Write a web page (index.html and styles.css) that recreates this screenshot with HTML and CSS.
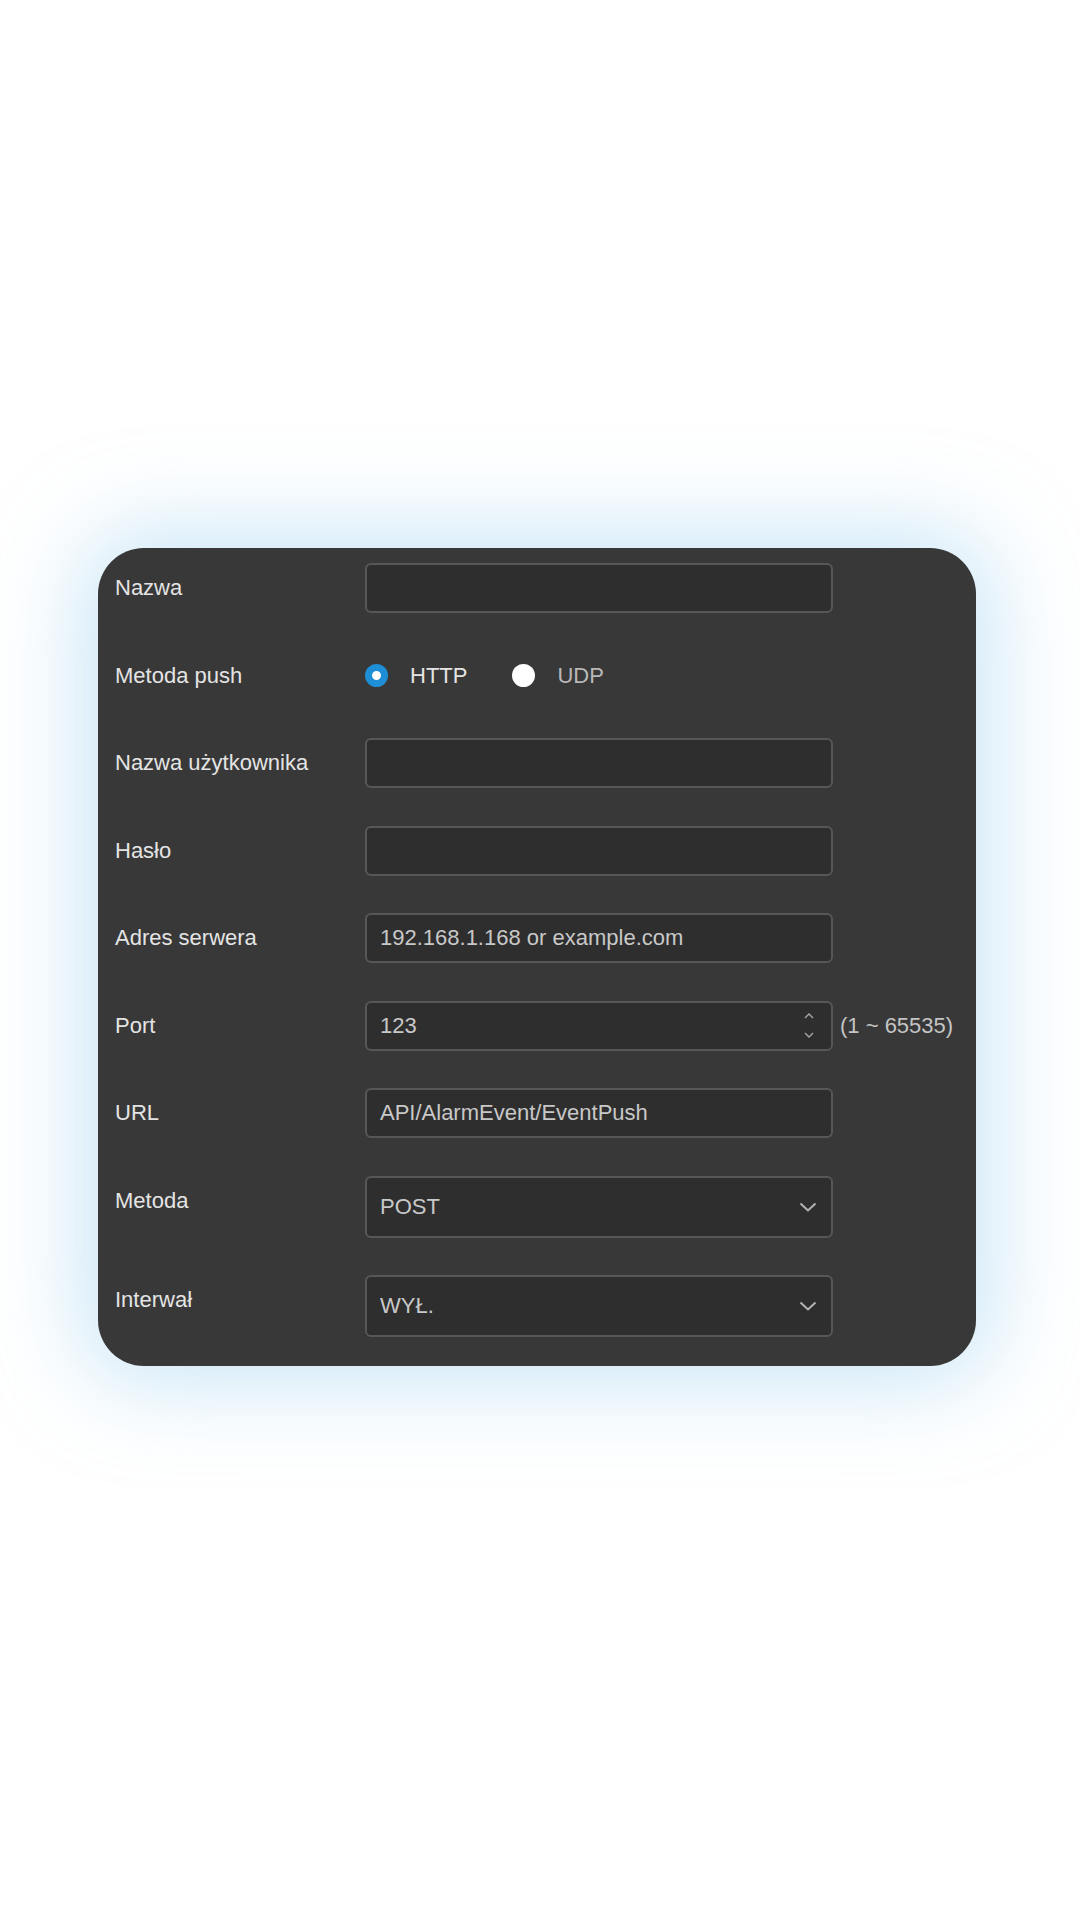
FILE: index.html
```html
<!DOCTYPE html>
<html lang="pl">
<head>
<meta charset="utf-8">
<title>Push</title>
<link rel="stylesheet" href="styles.css">
</head>
<body>
<div class="page">
  <div class="card">
    <div class="row">
      <div class="label">Nazwa</div>
      <div class="field"></div>
    </div>
    <div class="row">
      <div class="label">Metoda push</div>
      <div class="radios">
        <span class="radio checked"></span><span class="radio-text on">HTTP</span>
        <span class="radio"></span><span class="radio-text">UDP</span>
      </div>
    </div>
    <div class="row">
      <div class="label">Nazwa użytkownika</div>
      <div class="field"></div>
    </div>
    <div class="row">
      <div class="label">Hasło</div>
      <div class="field"></div>
    </div>
    <div class="row">
      <div class="label">Adres serwera</div>
      <div class="field">192.168.1.168 or example.com</div>
    </div>
    <div class="row">
      <div class="label">Port</div>
      <div class="field spin">
        <span class="value">123</span>
        <span class="spinner">
          <svg width="12" height="8" viewBox="0 0 12 8"><path d="M2 6 L6 2 L10 6" fill="none" stroke="#aaaaaa" stroke-width="1.3"/></svg>
          <svg width="12" height="8" viewBox="0 0 12 8"><path d="M2 2 L6 6 L10 2" fill="none" stroke="#aaaaaa" stroke-width="1.3"/></svg>
        </span>
      </div>
      <div class="hint">(1 ~ 65535)</div>
    </div>
    <div class="row">
      <div class="label">URL</div>
      <div class="field">API/AlarmEvent/EventPush</div>
    </div>
    <div class="row">
      <div class="label">Metoda</div>
      <div class="field select">
        <span class="value">POST</span>
        <svg class="chev" width="18" height="10" viewBox="0 0 18 10"><path d="M1.5 1.5 L9 8.5 L16.5 1.5" fill="none" stroke="#b4b4b4" stroke-width="2"/></svg>
      </div>
    </div>
    <div class="row">
      <div class="label">Interwał</div>
      <div class="field select">
        <span class="value">WYŁ.</span>
        <svg class="chev" width="18" height="10" viewBox="0 0 18 10"><path d="M1.5 1.5 L9 8.5 L16.5 1.5" fill="none" stroke="#b4b4b4" stroke-width="2"/></svg>
      </div>
    </div>
  </div>
</div>
</body>
</html>
```
FILE: styles.css
```css
html, body {
  margin: 0;
  padding: 0;
  background: #ffffff;
}
body {
  width: 1080px;
  height: 1920px;
  font-family: "Liberation Sans", Arial, sans-serif;
  font-size: 22px;
  overflow: hidden;
}
.page {
  padding-top: 548px;
  padding-left: 98px;
}
.card {
  width: 878px;
  height: 818px;
  box-sizing: border-box;
  background: #383838;
  border-radius: 46px;
  padding: 15px 0 28px 17px;
  display: flex;
  flex-direction: column;
  gap: 37.5px;
  box-shadow: 0 0 90px 16px rgba(150, 205, 240, 0.5);
}
.row {
  display: flex;
  align-items: flex-start;
}
.label {
  width: 250px;
  flex: none;
  line-height: 50px;
  color: #e4e4e4;
}
.field {
  width: 468px;
  height: 50px;
  box-sizing: border-box;
  border: 2px solid #575757;
  border-radius: 6px;
  background: #2e2e2e;
  padding: 0 13px;
  display: flex;
  align-items: center;
  color: #c8c8c8;
  white-space: nowrap;
}
.field.select {
  height: 62px;
  justify-content: space-between;
  padding-right: 14px;
}
.field.spin {
  justify-content: space-between;
  padding-right: 16px;
}
.spinner {
  display: flex;
  flex-direction: column;
  gap: 11px;
}
.spinner svg {
  display: block;
}
.chev {
  display: block;
}
.hint {
  line-height: 50px;
  margin-left: 7px;
  color: #c4c4c4;
}
.radios {
  height: 50px;
  display: flex;
  align-items: center;
}
.radio {
  width: 23px;
  height: 23px;
  border-radius: 50%;
  background: #ffffff;
  box-sizing: border-box;
  flex: none;
}
.radio.checked {
  background: #ffffff;
  border: 7px solid #1e8fd6;
}
.radio-text {
  margin-left: 22px;
  color: #b8b8b8;
}
.radio-text.on {
  color: #e4e4e4;
  margin-right: 45px;
}
```
